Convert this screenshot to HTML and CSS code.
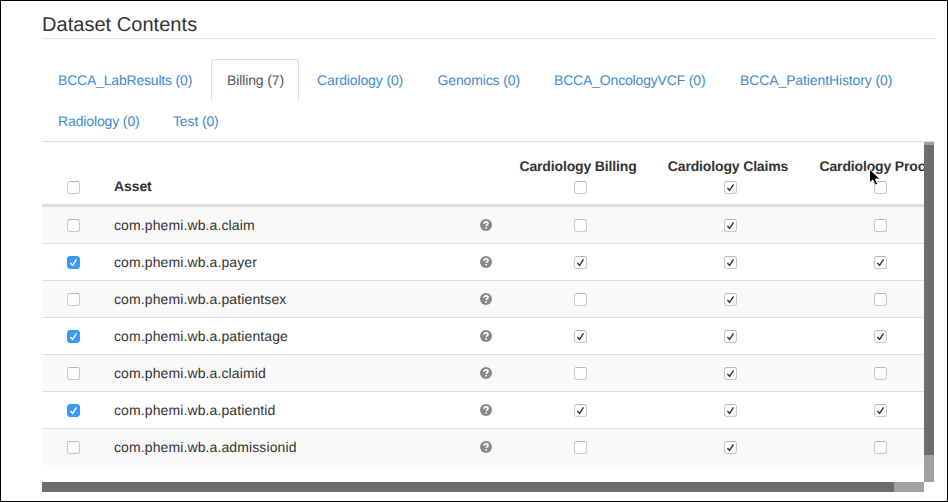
FILE: index.html
```
<!DOCTYPE html>
<html lang="en">
<head>
<meta charset="utf-8">
<title>Dataset Contents</title>
<link rel="stylesheet" href="styles.css">
</head>
<body>
<svg class="defs" aria-hidden="true">
  <symbol id="tick" viewBox="0 0 13 13"><path d="M3.4 7 5.6 9.3 9.5 3.4" fill="none" stroke="currentColor" stroke-width="1.4"/></symbol>
  <symbol id="help" viewBox="0 0 12 12"><circle cx="6" cy="6" r="6" fill="#888"/><path d="M4 4.7C4 3.4 4.8 2.9 6 2.9S8 3.5 8 4.5C8 5.7 6.2 5.6 6.2 7.1" fill="none" stroke="#fff" stroke-width="1.6"/><path d="M5.3 7.9h1.7v1.6H5.3z" fill="#fff"/></symbol>
</svg>
<main class="page">
  <h1 class="title">Dataset Contents</h1>
  <nav class="tabs">
    <a class="tab t1">BCCA_LabResults (0)</a>
    <a class="tab t2 active">Billing (7)</a>
    <a class="tab t3">Cardiology (0)</a>
    <a class="tab t4">Genomics (0)</a>
    <a class="tab t5">BCCA_OncologyVCF (0)</a>
    <a class="tab t6">BCCA_PatientHistory (0)</a>
    <a class="tab t7">Radiology (0)</a>
    <a class="tab t8">Test (0)</a>
  </nav>
  <section class="viewport">
    <div class="pane">
      <div class="row head">
        <div class="pick"><i class="box"></i></div>
        <div class="asset">Asset</div>
        <div class="info"></div>
        <div class="col"><span>Cardiology Billing</span><i class="box"></i></div>
        <div class="col"><span>Cardiology Claims</span><i class="box"><svg><use href="#tick"/></svg></i></div>
        <div class="col"><span class="wide">Cardiology Proc</span><i class="box"></i></div>
      </div>
      <div id="rows"></div>
    </div>
    <div class="vbar"><div class="vthumb"></div></div>
    <div class="hbar"><div class="hthumb"></div></div>
  </section>
  <svg class="cursor" viewBox="0 0 14 19"><path d="M1.5 1v14l3.3-3 2.2 5.2 2.7-1.1-2.2-5.1h4.6z" fill="#000" stroke="#fff" stroke-width="1"/></svg>
</main>
<script src="rows.js"></script>
</body>
</html>
```
FILE: styles.css
```
* { box-sizing: border-box; }
body { margin: 0; font: 14px/20px "Liberation Sans", Arial, sans-serif; color: #333; background: #fff; text-rendering: geometricPrecision; }
.defs { display: none; }
.page { position: relative; width: 948px; height: 502px; padding: 9px 12px 0 41px; border: 1px solid #000; overflow: hidden; }
.title { margin: 0 0 20px; height: 29px; border-bottom: 1px solid #e5e5e5; font-size: 20px; font-weight: 400; line-height: 30px; letter-spacing: 0.04px; }
.tabs { display: flex; flex-wrap: wrap; height: 83px; border-bottom: 1px solid #ddd; }
.tab { height: 41px; margin-right: 2px; padding: 10px 0 10px 15px; border: 1px solid transparent; border-bottom: 0; border-radius: 4px 4px 0 0; color: #428bca; letter-spacing: -0.13px; white-space: nowrap; }
.tab.active { border-color: #ddd; color: #555; }
.t1 { width: 167px; letter-spacing: -0.19px; }
.t2 { width: 88px; }
.t3 { width: 118.5px; }
.t4 { width: 114.5px; }
.t5 { width: 184px; letter-spacing: -0.17px; }
.t6 { width: 186px; letter-spacing: -0.11px; }
.t7 { width: 113px; }
.t8 { width: 78px; }
.viewport { display: grid; grid-template-columns: 882px 10px; grid-template-rows: 340px 10px; }
.pane { overflow: hidden; }
.row { display: grid; grid-template-columns: 64px 354px 45px 150px 150px 150px; align-items: center; width: 913px; height: 37px; border-top: 1px solid #ddd; }
.row:nth-child(odd) { background: #f9f9f9; }
.row.head { height: 64px; padding-bottom: 8px; border: 0; border-bottom: 2px solid #ddd; align-items: end; background: #fff; font-weight: 700; }
.head .box { margin-bottom: 2px; }
.pick { display: flex; justify-content: center; padding-right: 1px; }
.asset { padding-left: 8px; letter-spacing: 0.11px; }
.head .asset { letter-spacing: -0.1px; }
.info { display: flex; justify-content: center; padding-left: 7px; }
.info svg { width: 12px; height: 12px; }
.col { display: flex; flex-direction: column; align-items: center; white-space: nowrap; letter-spacing: -0.15px; }
.col span { margin: 0 4px 5px 0; }
.col .wide { width: 120px; margin-right: 1px; }
.box { display: block; width: 13px; height: 13px; border: 1px solid #c8c8c8; border-top-color: #b5b5b5; border-radius: 3px; background: #fff; color: #333; }
.row:not(.head) .box { margin-top: 1px; }
.box svg { display: block; width: 13px; height: 13px; margin: -1px; }
.box.blue { border-color: #3b99fc; background: #3b99fc; color: #fff; }
.vbar { padding-top: 3px; background: #a0a09e; }
.vthumb { height: 310px; background: #6d6d6d; }
.hbar { background: #a0a09e; }
.hthumb { width: 852px; height: 10px; background: #6d6d6d; }
.cursor { position: absolute; left: 867px; top: 167px; width: 14px; height: 19px; }
```
FILE: rows.js
```
const rows = [
  ["claim", 0, 0, 1, 0],
  ["payer", 1, 1, 1, 1],
  ["patientsex", 0, 0, 1, 0],
  ["patientage", 1, 1, 1, 1],
  ["claimid", 0, 0, 1, 0],
  ["patientid", 1, 1, 1, 1],
  ["admissionid", 0, 0, 1, 0]
];
const box = (on, cls = "") =>
  `<i class="box ${on ? cls : ""}">${on ? '<svg><use href="#tick"/></svg>' : ""}</i>`;
document.getElementById("rows").innerHTML = rows.map(([name, pick, ...cols]) => `
  <div class="row">
    <div class="pick">${box(pick, "blue")}</div>
    <div class="asset">com.phemi.wb.a.${name}</div>
    <div class="info"><svg><use href="#help"/></svg></div>
    ${cols.map(c => `<div class="col">${box(c)}</div>`).join("")}
  </div>`).join("");
```
